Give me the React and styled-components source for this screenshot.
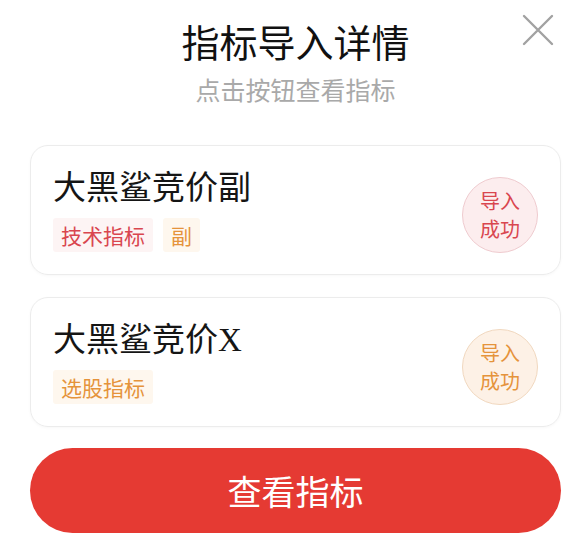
import React from "react";
import styled, { createGlobalStyle } from "styled-components";

const GlobalStyle = createGlobalStyle`
  html, body {
    margin: 0;
    padding: 0;
    background: #ffffff;
  }
  body {
    font-family: "Noto Sans CJK SC", "Noto Sans", sans-serif;
  }
`;

const tones = {
  red: { text: "#d9464f", tagBg: "#fdf4f4", ringBg: "#fcedee", ring: "#efcbcf" },
  orange: { text: "#e5933b", tagBg: "#fef7ee", ringBg: "#fdf1e6", ring: "#f1d8bf" }
};

const Sheet = styled.div`
  position: relative;
  width: 586px;
  height: 543px;
  box-sizing: border-box;
  padding: 19px 25px 0 30px;
  display: flex;
  flex-direction: column;
  background: #ffffff;
`;

const Header = styled.header`
  display: flex;
  flex-direction: column;
  align-items: center;
  gap: 11px;
  margin-bottom: 41px;
`;

const Title = styled.h1`
  margin: 0;
  font-size: 38px;
  line-height: 44px;
  font-weight: 400;
  color: #111111;
`;

const Subtitle = styled.p`
  margin: 0;
  font-size: 25px;
  line-height: 30px;
  color: #a9a9a9;
`;

const CloseButton = styled.button`
  position: absolute;
  top: 13px;
  right: 31px;
  width: 34px;
  height: 34px;
  padding: 0;
  border: 0;
  background: transparent;
  display: flex;
  align-items: center;
  justify-content: center;
`;

const List = styled.div`
  display: flex;
  flex-direction: column;
  gap: 22px;
  margin-bottom: 21px;
`;

const Card = styled.div`
  height: 130px;
  box-sizing: border-box;
  padding: 0 22px;
  border: 1px solid #ececec;
  border-radius: 18px;
  box-shadow: 0 1px 3px rgba(0, 0, 0, 0.03);
  display: flex;
  align-items: center;
  justify-content: space-between;
`;

const Info = styled.div`
  display: flex;
  flex-direction: column;
  gap: 12px;
  padding-top: 1px;
`;

const Name = styled.div`
  font-family: "Liberation Serif", "Noto Sans CJK SC", serif;
  font-size: 33px;
  line-height: 36px;
  color: #151515;
`;

const Tags = styled.div`
  display: flex;
  gap: 10px;
`;

const Tag = styled.span`
  height: 34px;
  padding: 0 8px;
  display: inline-flex;
  align-items: center;
  font-size: 21px;
  color: ${(p) => tones[p.$tone].text};
  background: ${(p) => tones[p.$tone].tagBg};
  border-radius: 3px;
`;

const Stamp = styled.div`
  width: 76px;
  height: 76px;
  box-sizing: border-box;
  border-radius: 50%;
  border: 1px solid ${(p) => tones[p.$tone].ring};
  background: ${(p) => tones[p.$tone].ringBg};
  color: ${(p) => tones[p.$tone].text};
  display: flex;
  flex-direction: column;
  align-items: center;
  justify-content: center;
  font-size: 20px;
  line-height: 28px;
  margin-top: 10px;
`;

const PrimaryButton = styled.button`
  height: 85px;
  border: 0;
  border-radius: 43px;
  background: #e53a33;
  color: #ffffff;
  font-family: "Noto Sans CJK SC", sans-serif;
  font-size: 34px;
  display: flex;
  align-items: center;
  justify-content: center;
`;

const items = [
  {
    name: "大黑鲨竞价副",
    tone: "red",
    tags: [
      { label: "技术指标", tone: "red" },
      { label: "副", tone: "orange" }
    ]
  },
  {
    name: "大黑鲨竞价X",
    tone: "orange",
    tags: [{ label: "选股指标", tone: "orange" }]
  }
];

const CloseIcon = () => (
  <svg width="32" height="32" viewBox="0 0 32 32">
    <path
      d="M2 2 L30 30 M30 2 L2 30"
      stroke="#a2a2a2"
      strokeWidth="2.4"
      strokeLinecap="round"
    />
  </svg>
);

export default function App() {
  return (
    <>
      <GlobalStyle />
      <Sheet>
        <CloseButton aria-label="关闭">
          <CloseIcon />
        </CloseButton>
        <Header>
          <Title>指标导入详情</Title>
          <Subtitle>点击按钮查看指标</Subtitle>
        </Header>
        <List>
          {items.map((item) => (
            <Card key={item.name}>
              <Info>
                <Name>{item.name}</Name>
                <Tags>
                  {item.tags.map((t) => (
                    <Tag key={t.label} $tone={t.tone}>
                      {t.label}
                    </Tag>
                  ))}
                </Tags>
              </Info>
              <Stamp $tone={item.tone}>
                <span>导入</span>
                <span>成功</span>
              </Stamp>
            </Card>
          ))}
        </List>
        <PrimaryButton>查看指标</PrimaryButton>
      </Sheet>
    </>
  );
}
